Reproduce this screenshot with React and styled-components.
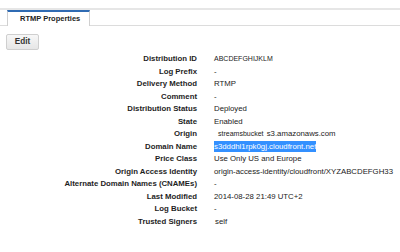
import React from "react";
import styled, { createGlobalStyle } from "styled-components";

const GlobalStyle = createGlobalStyle`
  html, body {
    margin: 0;
    padding: 0;
    background: #ffffff;
    font-family: "Liberation Sans", Arial, sans-serif;
    color: #222222;
  }
`;

const Page = styled.div`
  width: 400px;
  height: 252px;
  overflow: hidden;
  padding-top: 8px;
  box-sizing: border-box;
`;

const TopRule = styled.div`
  height: 2px;
  background: #e6e6e6;
`;

const TabBar = styled.div`
  display: flex;
  padding-left: 7px;
  border-bottom: 1px solid #dcdcdc;
`;

const Tab = styled.div`
  height: 14px;
  padding: 0 9px 0 12px;
  border: 1px solid #d0d0d0;
  border-top: 2px solid #2f6bb3;
  border-bottom: none;
  margin-bottom: -1px;
  background: #ffffff;
  font-size: 7.5px;
  font-weight: bold;
  line-height: 14px;
  color: #222222;
`;

const Toolbar = styled.div`
  padding: 4px 6px 0;
`;

const Button = styled.button`
  width: 33px;
  height: 16px;
  padding: 0;
  border: 1px solid #cfcfcf;
  border-radius: 2px;
  background: linear-gradient(#f7f7f7, #e6e6e6);
  font-family: "Liberation Sans", Arial, sans-serif;
  font-size: 8.2px;
  font-weight: bold;
  color: #333333;
`;

const Details = styled.dl`
  display: grid;
  grid-template-columns: 197px auto;
  column-gap: 17px;
  margin: 3.5px 0 0;
  font-size: 7.8px;
  line-height: 12.5px;
`;

const Label = styled.dt`
  text-align: right;
  font-weight: bold;
  color: #1e1e1e;
  white-space: nowrap;
`;

const Value = styled.dd`
  margin: 0;
  white-space: nowrap;
  color: #222222;
  padding-left: ${(p) => p.$indent || 0}px;
  font-size: ${(p) => (p.$small ? "7px" : "inherit")};
`;

const Bucket = styled.span`
  font-size: 7px;
  margin-right: 1px;
`;

const Selected = styled.span`
  background: #3390ff;
  color: #ffffff;
  padding: 1px 0;
`;

const rows = [
  ["Distribution ID", "ABCDEFGHIJKLM", { small: true }],
  ["Log Prefix", "-"],
  ["Delivery Method", "RTMP"],
  ["Comment", "-"],
  ["Distribution Status", "Deployed"],
  ["State", "Enabled"],
  ["Origin", "origin", { indent: 4 }],
  ["Domain Name", "domain"],
  ["Price Class", "Use Only US and Europe"],
  ["Origin Access Identity", "origin-access-identity/cloudfront/XYZABCDEFGH33"],
  ["Alternate Domain Names (CNAMEs)", "-"],
  ["Last Modified", "2014-08-28 21:49 UTC+2"],
  ["Log Bucket", "-"],
  ["Trusted Signers", "self", { indent: 1 }],
];

const renderValue = (v) => {
  if (v === "origin")
    return (
      <>
        <Bucket>streamsbucket</Bucket> s3.amazonaws.com
      </>
    );
  if (v === "domain") return <Selected>s3dddhl1rpk0gj.cloudfront.net</Selected>;
  return v;
};

export default function App() {
  return (
    <Page>
      <GlobalStyle />
      <TopRule />
      <TabBar>
        <Tab>RTMP Properties</Tab>
      </TabBar>
      <Toolbar>
        <Button>Edit</Button>
      </Toolbar>
      <Details>
        {rows.map(([label, value, opts = {}]) => (
          <React.Fragment key={label}>
            <Label>{label}</Label>
            <Value $small={opts.small} $indent={opts.indent}>
              {renderValue(value)}
            </Value>
          </React.Fragment>
        ))}
      </Details>
    </Page>
  );
}
